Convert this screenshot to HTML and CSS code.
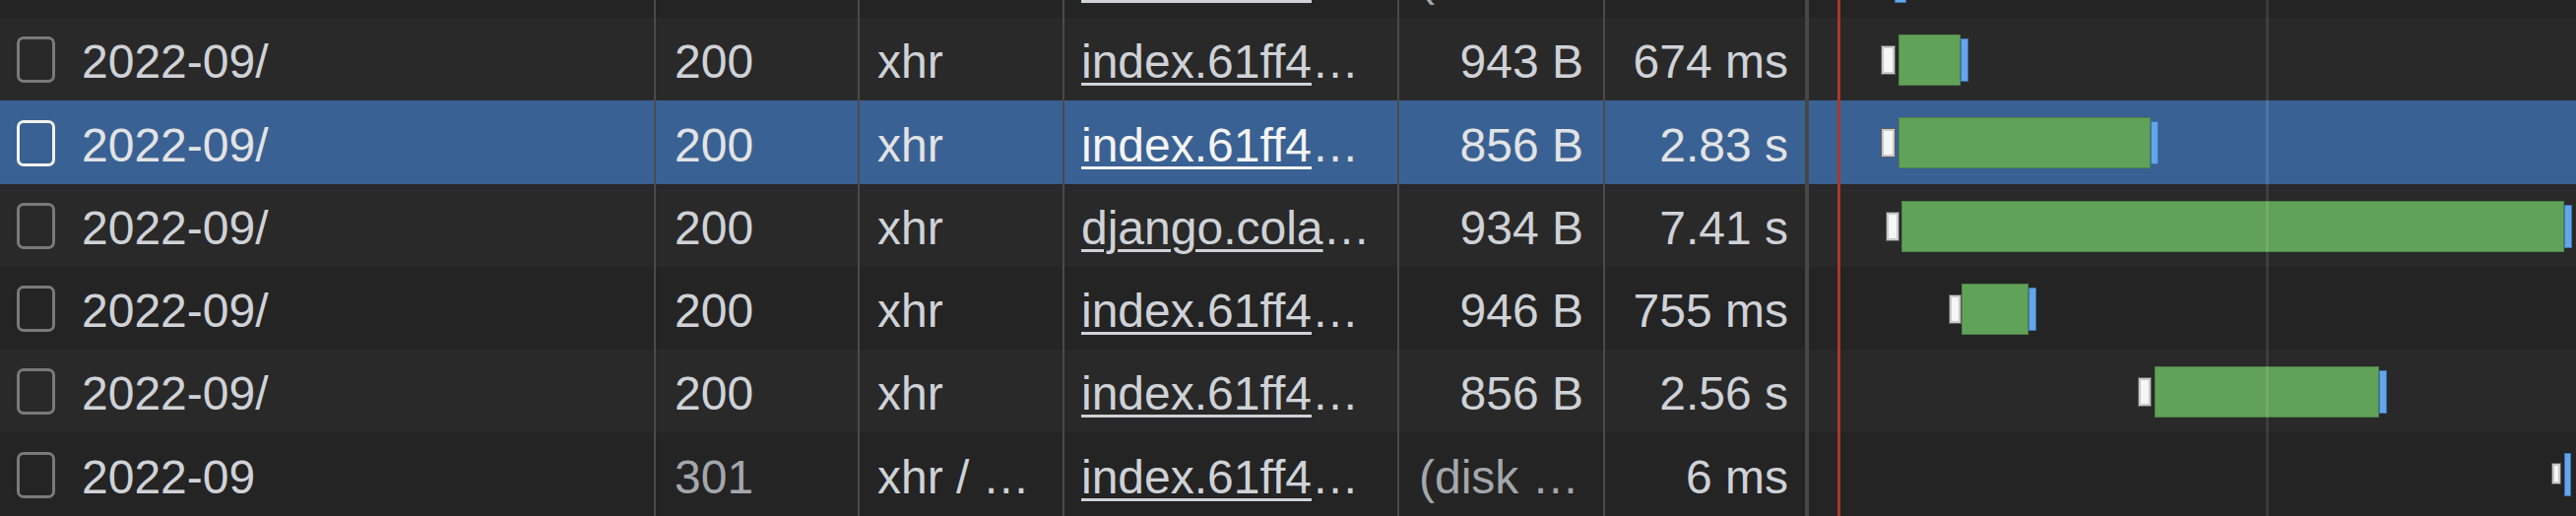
FILE: index.html
```html
<!DOCTYPE html>
<html lang="en">
<head>
<meta charset="utf-8">
<title>Network log</title>
<link rel="stylesheet" href="styles.css">
</head>
<body>
<div class="log">
  <div class="row dark">
    <div class="cell name"><span class="box"></span>2022-09</div>
    <div class="cell dim">301</div>
    <div class="cell">xhr / …</div>
    <div class="cell"><span class="link">index.61ff4</span>…</div>
    <div class="cell dim">(disk …</div>
    <div class="cell num">6 ms</div>
    <div class="cell wf"><span class="bar recv" style="left:87px;width:12px;top:50px;height:19px"></span></div>
  </div>
  <div class="row light">
    <div class="cell name"><span class="box"></span>2022-09/</div>
    <div class="cell">200</div>
    <div class="cell">xhr</div>
    <div class="cell"><span class="link">index.61ff4</span>…</div>
    <div class="cell num size">943 B</div>
    <div class="cell num">674 ms</div>
    <div class="cell wf">
      <span class="bar wait" style="left:74px;width:13px"></span>
      <span class="bar dl" style="left:91px;width:63px"></span>
      <span class="bar recv" style="left:154px;width:8px"></span>
    </div>
  </div>
  <div class="row sel">
    <div class="cell name"><span class="box"></span>2022-09/</div>
    <div class="cell">200</div>
    <div class="cell">xhr</div>
    <div class="cell"><span class="link">index.61ff4</span>…</div>
    <div class="cell num size">856 B</div>
    <div class="cell num">2.83 s</div>
    <div class="cell wf">
      <span class="bar wait" style="left:74px;width:13px"></span>
      <span class="bar dl" style="left:91px;width:256px"></span>
      <span class="bar recv" style="left:347px;width:8px"></span>
    </div>
  </div>
  <div class="row light">
    <div class="cell name"><span class="box"></span>2022-09/</div>
    <div class="cell">200</div>
    <div class="cell">xhr</div>
    <div class="cell"><span class="link">django.cola</span>…</div>
    <div class="cell num size">934 B</div>
    <div class="cell num">7.41 s</div>
    <div class="cell wf">
      <span class="bar wait" style="left:79px;width:12px"></span>
      <span class="bar dl" style="left:94px;width:673px"></span>
      <span class="bar recv" style="left:767px;width:8px"></span>
    </div>
  </div>
  <div class="row dark">
    <div class="cell name"><span class="box"></span>2022-09/</div>
    <div class="cell">200</div>
    <div class="cell">xhr</div>
    <div class="cell"><span class="link">index.61ff4</span>…</div>
    <div class="cell num size">946 B</div>
    <div class="cell num">755 ms</div>
    <div class="cell wf">
      <span class="bar wait" style="left:143px;width:11px"></span>
      <span class="bar dl" style="left:155px;width:68px"></span>
      <span class="bar recv" style="left:223px;width:8px"></span>
    </div>
  </div>
  <div class="row light">
    <div class="cell name"><span class="box"></span>2022-09/</div>
    <div class="cell">200</div>
    <div class="cell">xhr</div>
    <div class="cell"><span class="link">index.61ff4</span>…</div>
    <div class="cell num size">856 B</div>
    <div class="cell num">2.56 s</div>
    <div class="cell wf">
      <span class="bar wait" style="left:335px;width:12px"></span>
      <span class="bar dl" style="left:351px;width:228px"></span>
      <span class="bar recv" style="left:579px;width:8px"></span>
    </div>
  </div>
  <div class="row dark">
    <div class="cell name"><span class="box"></span>2022-09</div>
    <div class="cell dim">301</div>
    <div class="cell">xhr / …</div>
    <div class="cell"><span class="link">index.61ff4</span>…</div>
    <div class="cell dim">(disk …</div>
    <div class="cell num">6 ms</div>
    <div class="cell wf">
      <span class="bar wait small" style="left:755px;width:8px"></span>
      <span class="bar recv" style="left:767px;width:7px"></span>
    </div>
  </div>
  <span class="mark load"></span>
  <span class="mark grid"></span>
</div>
</body>
</html>
```

FILE: styles.css
```css
html, body {
  margin: 0;
  padding: 0;
  background: #242424;
  overflow: hidden;
}

body {
  width: 2616px;
  height: 524px;
  font-family: "Liberation Sans", Arial, sans-serif;
  font-size: 48px;
  color: #cfd2d7;
}

.log {
  position: relative;
  display: grid;
  grid-template-rows: 84px 84px 85px 84px 84px 84px 85px;
  margin-top: -66px;
}

.row {
  display: grid;
  grid-template-columns: 666px 207px 208px 340px 209px 207px 1fr;
}

.row.light { background: #292929; }
.row.dark { background: #242424; }
.row.sel { background: #3a6193; color: #e2e3e5; }

.cell {
  display: flex;
  align-items: center;
  box-sizing: border-box;
  min-width: 0;
  padding: 5px 0 0 18px;
  border-right: 2px solid #4a4a4a;
  white-space: nowrap;
  overflow: hidden;
}

.cell:nth-child(2) { padding-left: 19px; }
.cell:nth-child(4) { padding-left: 17px; }
.cell:nth-child(5) { padding-left: 20px; }

.cell.name { padding-left: 17px; }

.box {
  flex: none;
  box-sizing: border-box;
  width: 39px;
  height: 47px;
  margin: 0 27px 4px 0;
  border: 3px solid #7a7a7a;
  border-radius: 7px;
}

.sel .box { border-color: #f2f2f2; }

.dim { color: #a4a7ac; }

.num {
  justify-content: flex-end;
  padding-left: 0;
  padding-right: 17px;
}

.cell.size { padding-left: 0; padding-right: 20px; }

.cell:nth-child(6) { border-right: 4px solid #474747; }

.link {
  text-decoration: underline;
  text-decoration-thickness: 3px;
  text-underline-offset: 5px;
}

.sel .link { color: #f4f4f4; }

.wf {
  position: relative;
  border-right: none;
  padding: 0;
}

.bar {
  position: absolute;
  box-sizing: border-box;
}

.bar.wait {
  top: 29px;
  height: 28px;
  background: #f6f6f6;
  border: 2px solid #c9c9c9;
  box-shadow: 0 0 0 1px #5e5e5e;
}

.bar.wait.small {
  top: 32px;
  height: 20px;
}

.bar.dl {
  top: 17px;
  height: 52px;
  background: #61a259;
  border: 1px solid #4c8346;
}

.bar.recv {
  top: 21px;
  height: 44px;
  background: #64a5eb;
  border: 1px solid #3d73ad;
}

.mark {
  position: absolute;
  top: 0;
  bottom: 0;
  width: 3px;
  pointer-events: none;
}

.mark.load {
  left: 1866px;
  background: #a8392d;
}

.mark.grid {
  left: 2301px;
  background: rgba(255, 255, 255, 0.1);
}
```
